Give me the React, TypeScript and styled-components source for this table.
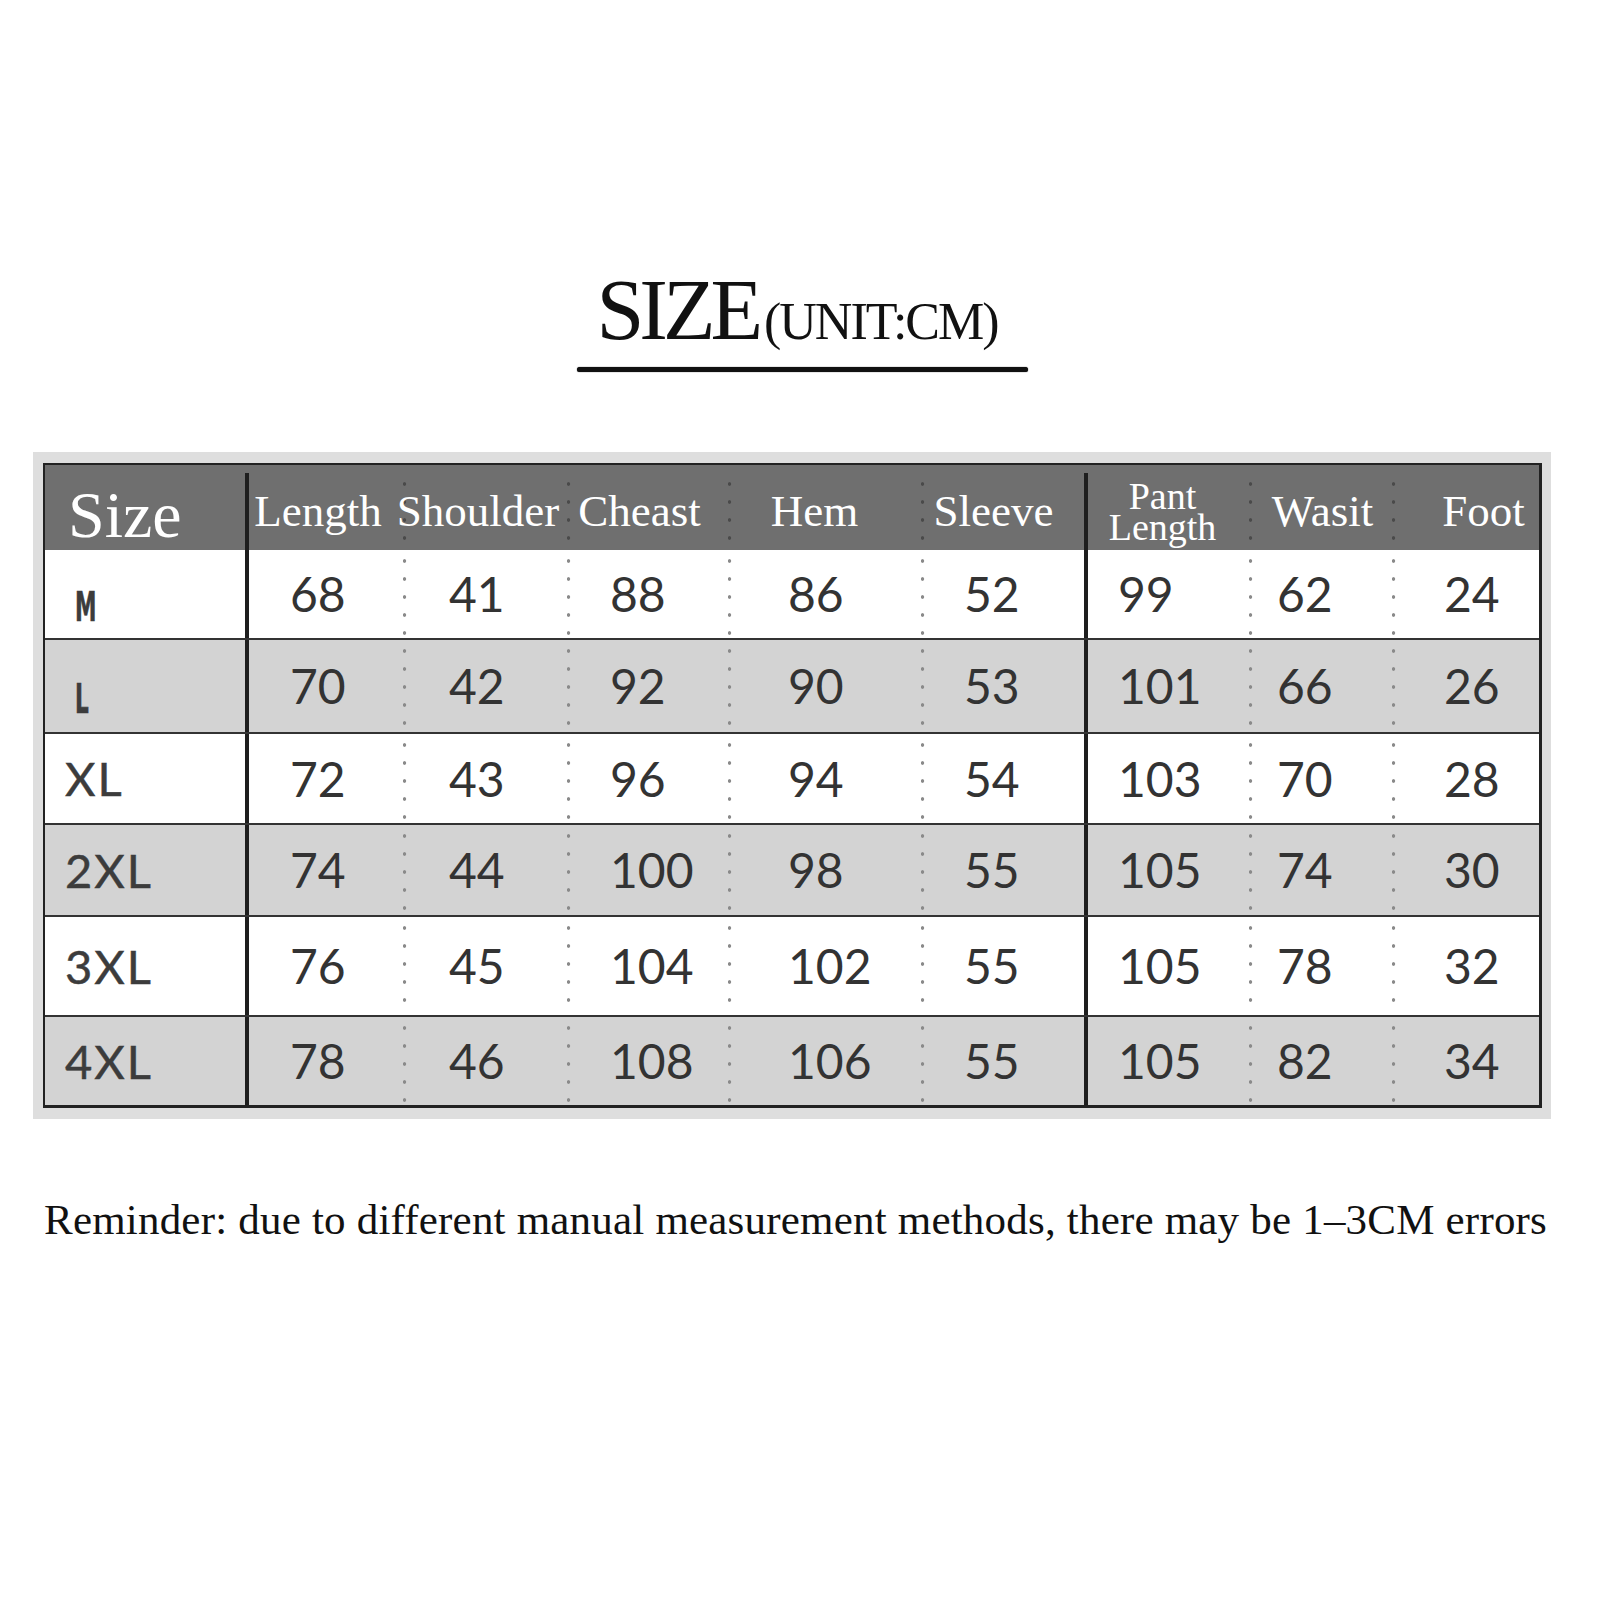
import styled, { createGlobalStyle } from 'styled-components'

const GlobalStyle = createGlobalStyle`
  html, body {
    margin: 0;
    padding: 0;
    background: #fff;
  }
  * {
    box-sizing: border-box;
  }
`

const Page = styled.div`
  display: flex;
  flex-direction: column;
  align-items: center;
  width: 1600px;
  height: 1600px;
  padding: 267px 49px 0 33px;
  background: #fff;
`

const Title = styled.div`
  display: flex;
  align-items: baseline;
  margin-left: 10px;
  font-family: 'Liberation Serif', 'Times New Roman', serif;
  color: #111;
  line-height: 1;
`

const Big = styled.span`
  font-size: 86px;
  letter-spacing: -5px;
`

const Unit = styled.span`
  margin-left: 6px;
  font-size: 52px;
  letter-spacing: -2px;
`

const Rule = styled.div`
  width: 451px;
  height: 5px;
  margin: 14px 0 0 20px;
  border-radius: 3px;
  background: #111;
  box-shadow: 0 0 1px #111;
`

const Frame = styled.div`
  align-self: stretch;
  margin-top: 80px;
  padding: 11px 9px 11px 10px;
  background: #dedede;
`

const Table = styled.div`
  border: 2px solid #222;
  border-right-width: 3px;
  border-bottom-width: 3px;
  background: #fff;
`

type Tone = 'head' | 'white' | 'gray'

const toneBg: Record<Tone, string> = {
  head: '#6f6f6f',
  white: '#ffffff',
  gray: '#d3d3d3',
}

const Row = styled.div<{ $tone: Tone; $h: number; $line?: boolean }>`
  display: grid;
  grid-template-columns: 200px 158px 164px 161px 193px 163px 165px 143px 147px;
  height: ${p => p.$h}px;
  background: ${p => toneBg[p.$tone]};
  border-top: ${p => (p.$line ? '2px solid #333' : 'none')};
  padding-top: ${p => (p.$tone === 'head' ? 8 : 0)}px;
`

type Sep = 'none' | 'thick' | 'dot'

const Cell = styled.div<{ $sep: Sep; $dot?: string }>`
  display: flex;
  align-items: center;
  min-width: 0;
  border-left: ${p => (p.$sep === 'thick' ? '4px solid #1e1e1e' : 'none')};
  background: ${p =>
    p.$sep === 'dot'
      ? `radial-gradient(circle, ${p.$dot} 1.4px, transparent 2.1px) -1px 2px / 5px 18px repeat-y`
      : 'none'};
`

const HeadCell = styled(Cell)<{ $shift: number }>`
  justify-content: center;
  padding-left: ${p => Math.max(0, p.$shift * 2)}px;
  padding-right: ${p => Math.max(0, -p.$shift * 2)}px;
  font-family: 'Liberation Serif', 'Times New Roman', serif;
  font-size: 45px;
  line-height: 1;
  color: #fff;
  text-align: center;
  white-space: nowrap;
`

const TwoLine = styled.span`
  display: flex;
  flex-direction: column;
  align-items: center;
  font-size: 38px;
  line-height: 31px;
`

const SizeHead = styled.div`
  display: flex;
  align-items: center;
  padding: 7px 0 0 23px;
  font-family: 'Liberation Serif', 'Times New Roman', serif;
  font-size: 66px;
  line-height: 1;
  color: #fff;
`

const SizeLabel = styled.div<{ $narrow?: boolean }>`
  display: flex;
  align-items: center;
  padding: ${p => (p.$narrow ? '26px 0 0 30px' : '0 0 0 20px')};
  font-family: ${p => (p.$narrow ? "'DejaVu Sans Condensed', 'DejaVu Sans', sans-serif" : "Lato, 'DejaVu Sans', sans-serif")};
  font-weight: ${p => (p.$narrow ? 700 : 400)};
  font-size: ${p => (p.$narrow ? 40 : 47)}px;
  letter-spacing: ${p => (p.$narrow ? 0 : 2)}px;
  line-height: 1;
  color: #3c3c3c;
  -webkit-text-stroke: ${p => (p.$narrow ? '0.6px #3c3c3c' : '0.5px #3c3c3c')};

  span {
    display: inline-block;
    transform: ${p => (p.$narrow ? 'scaleX(0.6)' : 'none')};
    transform-origin: left center;
  }
`

const NumCell = styled(Cell)<{ $pad: number }>`
  padding-left: ${p => p.$pad}px;
  font-family: Lato, 'DejaVu Sans', sans-serif;
  font-size: 48px;
  line-height: 1;
  color: #333;
`

const Footer = styled.div`
  align-self: flex-start;
  margin: 79px 0 0 11px;
  font-family: 'Liberation Serif', 'Times New Roman', serif;
  font-size: 43px;
  letter-spacing: 0.2px;
  line-height: 1;
  color: #111;
  white-space: nowrap;
`

interface Column {
  label: string
  sep: Sep
  pad: number
  shift: number
  twoLine?: boolean
}

const columns: Column[] = [
  { label: 'Length', sep: 'thick', pad: 41, shift: -8 },
  { label: 'Shoulder', sep: 'dot', pad: 46, shift: -7 },
  { label: 'Cheast', sep: 'dot', pad: 43, shift: -8 },
  { label: 'Hem', sep: 'dot', pad: 60, shift: -10 },
  { label: 'Sleeve', sep: 'dot', pad: 43, shift: -9 },
  { label: 'Pant Length', sep: 'thick', pad: 30, shift: -6, twoLine: true },
  { label: 'Wasit', sep: 'dot', pad: 28, shift: 2 },
  { label: 'Foot', sep: 'dot', pad: 52, shift: 18 },
]

interface SizeRow {
  size: string
  values: number[]
  h: number
  narrow?: boolean
}

const rows: SizeRow[] = [
  { size: 'M', values: [68, 41, 88, 86, 52, 99, 62, 24], h: 88, narrow: true },
  { size: 'L', values: [70, 42, 92, 90, 53, 101, 66, 26], h: 94, narrow: true },
  { size: 'XL', values: [72, 43, 96, 94, 54, 103, 70, 28], h: 91 },
  { size: '2XL', values: [74, 44, 100, 98, 55, 105, 74, 30], h: 92 },
  { size: '3XL', values: [76, 45, 104, 102, 55, 105, 78, 32], h: 100 },
  { size: '4XL', values: [78, 46, 108, 106, 55, 105, 82, 34], h: 90 },
]

const App = () => {
  return (
    <Page>
      <GlobalStyle />
      <Title>
        <Big>SIZE</Big>
        <Unit>(UNIT:CM)</Unit>
      </Title>
      <Rule />

      <Frame>
        <Table>
          <Row $tone='head' $h={85}>
            <SizeHead>Size</SizeHead>
            {columns.map(col => (
              <HeadCell key={col.label} $sep={col.sep} $dot='#4a4a4a' $shift={col.shift}>
                {col.twoLine ? (
                  <TwoLine>
                    <span>Pant</span>
                    <span>Length</span>
                  </TwoLine>
                ) : (
                  col.label
                )}
              </HeadCell>
            ))}
          </Row>
          {rows.map((row, i) => (
            <Row key={row.size} $tone={i % 2 === 0 ? 'white' : 'gray'} $h={row.h} $line={i > 0}>
              <SizeLabel $narrow={row.narrow}>
                <span>{row.size}</span>
              </SizeLabel>
              {row.values.map((v, j) => (
                <NumCell key={j} $sep={columns[j].sep} $dot='#8a8a8a' $pad={columns[j].pad}>
                  {v}
                </NumCell>
              ))}
            </Row>
          ))}
        </Table>
      </Frame>

      <Footer>Reminder: due to different manual measurement methods, there may be 1–3CM errors</Footer>
    </Page>
  )
}

export default App
